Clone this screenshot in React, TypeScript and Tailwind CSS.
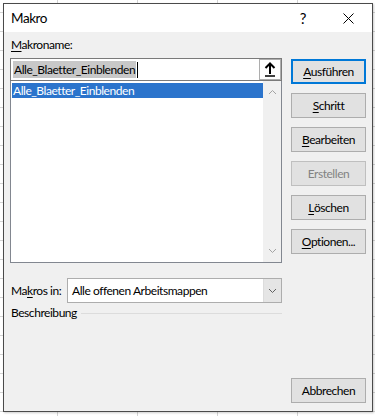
import React from "react";

const U = ({ children }: { children: React.ReactNode }) => (
  <span className="underline underline-offset-2">{children}</span>
);

function Btn({
  children,
  def,
  disabled,
}: {
  children: React.ReactNode;
  def?: boolean;
  disabled?: boolean;
}) {
  return (
    <div
      className={
        "flex h-[25px] w-[75px] items-center justify-center whitespace-nowrap border bg-[#e1e1e1] text-[12px] " +
        (def
          ? "border-[#0078d7] shadow-[inset_0_0_0_1px_#0078d7] "
          : disabled
          ? "border-[#bfbfbf] bg-[#cccccc] "
          : "border-[#adadad] ") +
        (disabled ? "text-[#838383]" : "text-black")
      }
    >
      {children}
    </div>
  );
}

const Chevron = ({ up }: { up?: boolean }) => (
  <svg width="9" height="6" viewBox="0 0 9 6" className="block">
    <path
      d={up ? "M1 5 L4.5 1.5 L8 5" : "M1 1 L4.5 4.5 L8 1"}
      fill="none"
      stroke="currentColor"
      strokeWidth="1"
    />
  </svg>
);

export default function App() {
  return (
    <div
      className="h-[416px] w-[375px] overflow-hidden bg-white pt-[3px] pl-[3px] tracking-[-0.45px] bg-[linear-gradient(to_right,#d4d4d4_1px,transparent_1px),linear-gradient(to_bottom,#d4d4d4_1px,transparent_1px)] bg-[length:80px_19px] bg-[position:57px_12px]"
      style={{ fontFamily: 'Lato, "Segoe UI", sans-serif' }}
    >
      <div className="flex h-[409px] w-[370px] flex-col border border-[#4a4a4a] shadow-[1px_1px_2px_rgba(0,0,0,0.2)]">
        {/* Title bar */}
        <div className="flex h-[28px] shrink-0 items-center bg-white pl-[7px] text-[13.5px] text-black">
          <span className="flex-1">Makro</span>
          <span className="mr-[37px] text-[15px]">?</span>
          <svg width="11" height="11" viewBox="0 0 11 11" className="mr-[18px]">
            <path d="M0.5 0.5 L10.5 10.5 M10.5 0.5 L0.5 10.5" stroke="#000" strokeWidth="1" />
          </svg>
        </div>
        {/* Body */}
        <div className="flex flex-1 bg-[#f0f0f0] pl-[6px] text-[12px] leading-[14px] text-black">
          {/* left column */}
          <div className="flex w-[272px] flex-col">
            <div className="mt-[6px] pl-[1px]">
              <U>M</U>akroname:
            </div>
            <div className="mt-[6px] flex h-[23px] border border-[#7a7a7a] bg-white">
              <div className="flex flex-1 items-center pl-[2px]">
                <span className="bg-[#c8c8c8] px-[1px] leading-[17px]">Alle_Blaetter_Einblenden</span>
                <span className="ml-[1px] h-[16px] w-px bg-black" />
              </div>
              <div className="flex w-[22px] items-center justify-center border border-[#adadad] bg-white">
                <svg width="12" height="15" viewBox="0 0 12 15">
                  <path d="M6 1 L6 12 M1.5 6 L6 1.5 L10.5 6" fill="none" stroke="#000" strokeWidth="2" />
                  <path d="M1 14 H11" stroke="#000" strokeWidth="1.5" />
                </svg>
              </div>
            </div>
            <div className="flex h-[182px] border border-t-0 border-[#828790] bg-white">
              <div className="flex-1 pt-[2px] pl-[1px]">
                <div className="h-[15px] bg-[#2b74cc] pl-[1px] leading-[15px] text-white">
                  Alle_Blaetter_Einblenden
                </div>
              </div>
              <div className="flex w-[18px] flex-col items-center justify-between bg-[#f0f0f0] py-[8px] text-[#a3a3a3]">
                <Chevron up />
                <Chevron />
              </div>
            </div>
            <div className="mt-[15px] flex items-center">
              <div className="w-[57px] whitespace-nowrap pl-[1px]">
                Ma<U>k</U>ros in:
              </div>
              <div className="flex h-[25px] flex-1 border border-[#adadad] bg-white">
                <div className="flex flex-1 items-center pl-[4px]">Alle offenen Arbeitsmappen</div>
                <div className="flex w-[18px] items-center justify-center border-l border-[#dcdcdc] bg-[#e5e5e5] text-[#606060]">
                  <Chevron />
                </div>
              </div>
            </div>
            <div className="mt-[3px] flex items-center">
              <span className="pl-[1px]">Beschreibung</span>
              <div className="ml-[4px] h-px flex-1 bg-[#dcdcdc]" />
            </div>
          </div>
          {/* right column */}
          <div className="ml-[9px] flex flex-col pt-[27px] pb-[8px]">
            <div className="flex flex-col gap-[9px]">
              <Btn def>
                <U>A</U>usführen
              </Btn>
              <Btn>
                <U>S</U>chritt
              </Btn>
              <Btn>
                <U>B</U>earbeiten
              </Btn>
              <Btn disabled>Erstellen</Btn>
              <Btn>
                <U>L</U>öschen
              </Btn>
              <Btn>
                <U>O</U>ptionen...
              </Btn>
            </div>
            <div className="mt-auto">
              <Btn>Abbrechen</Btn>
            </div>
          </div>
        </div>
      </div>
    </div>
  );
}
